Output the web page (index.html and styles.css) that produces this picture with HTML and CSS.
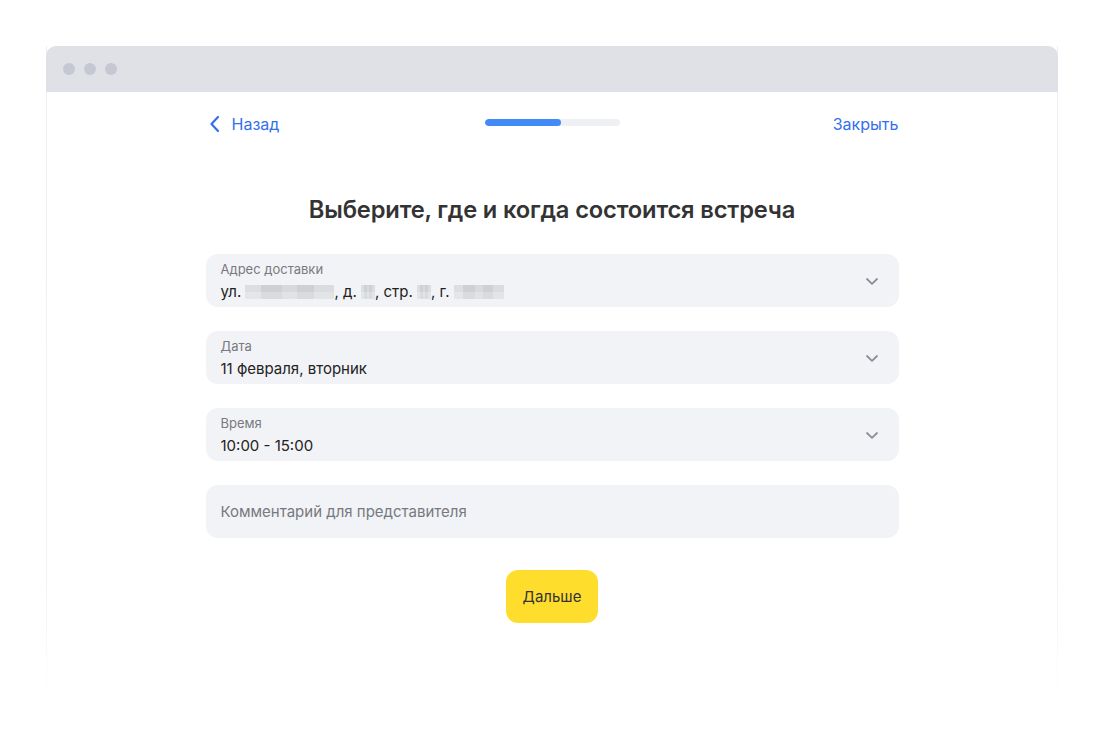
FILE: index.html
```html
<!DOCTYPE html>
<html lang="ru">
<head>
<meta charset="utf-8">
<title>Встреча</title>
<link rel="stylesheet" href="styles.css">
</head>
<body>
<div class="window">
  <div class="titlebar">
    <span class="dot"></span><span class="dot"></span><span class="dot"></span>
  </div>
  <div class="page">
    <div class="nav">
      <a class="back">
        <svg width="12" height="18" viewBox="0 0 12 18"><path d="M9 2 L2.5 9 L9 16" fill="none" stroke="#336fee" stroke-width="2.2" stroke-linecap="round" stroke-linejoin="round"/></svg>
        <span>Назад</span>
      </a>
      <div class="progress"><div class="fill" style="width:57%"></div></div>
      <a class="close">Закрыть</a>
    </div>
    <h1 class="title">Выберите, где и когда состоится встреча</h1>
    <div class="form">
      <div class="field">
        <div class="text">
          <div class="label">Адрес доставки</div>
          <div class="value">ул. <span class="blur b1"></span>, д. <span class="blur b2"></span>, стр. <span class="blur b3"></span>, г. <span class="blur b4"></span></div>
        </div>
        <svg class="chev" width="14" height="9" viewBox="0 0 14 9"><path d="M2 2 L7 6.8 L12 2" fill="none" stroke="#8b8e96" stroke-width="1.8" stroke-linecap="round" stroke-linejoin="round"/></svg>
      </div>
      <div class="field">
        <div class="text">
          <div class="label">Дата</div>
          <div class="value">11 февраля, вторник</div>
        </div>
        <svg class="chev" width="14" height="9" viewBox="0 0 14 9"><path d="M2 2 L7 6.8 L12 2" fill="none" stroke="#8b8e96" stroke-width="1.8" stroke-linecap="round" stroke-linejoin="round"/></svg>
      </div>
      <div class="field">
        <div class="text">
          <div class="label">Время</div>
          <div class="value">10:00 - 15:00</div>
        </div>
        <svg class="chev" width="14" height="9" viewBox="0 0 14 9"><path d="M2 2 L7 6.8 L12 2" fill="none" stroke="#8b8e96" stroke-width="1.8" stroke-linecap="round" stroke-linejoin="round"/></svg>
      </div>
      <div class="field comment">
        <div class="placeholder">Комментарий для представителя</div>
      </div>
    </div>
    <div class="actions">
      <button class="next">Дальше</button>
    </div>
  </div>
</div>
</body>
</html>
```

FILE: styles.css
```css
* { box-sizing: border-box; }
html, body { margin: 0; background: #fff; }
body {
  padding: 46px 46px 0;
  font-family: Inter, "Noto Sans", Roboto, sans-serif;
  color: #333;
  height: 748px;
  overflow: hidden;
}
.window {
  width: 1012px;
  height: 660px;
  border-radius: 10px 10px 0 0;
  background: #fff;
  border-left: 1px solid transparent;
  border-right: 1px solid transparent;
  border-image: linear-gradient(to bottom, #eceef2 0%, #f1f2f5 80%, rgba(255,255,255,0) 100%) 1;
}
.titlebar {
  height: 46px;
  background: #dfe1e6;
  border-radius: 10px 10px 0 0;
  display: flex;
  align-items: center;
  gap: 9px;
  padding-left: 17px;
  margin: 0 -1px;
}
.dot {
  width: 12px;
  height: 12px;
  border-radius: 50%;
  background: #c5c8d2;
}
.page {
  width: 693px;
  margin: 0 auto;
  padding-top: 21px;
}
.nav {
  height: 22px;
  display: grid;
  grid-template-columns: 1fr auto 1fr;
  align-items: center;
  font-size: 16px;
  color: #336fee;
}
.back {
  display: flex;
  align-items: center;
  gap: 11px;
  padding-left: 3px;
  justify-self: start;
}
.back svg { display: block; }
.progress {
  width: 135px;
  height: 7px;
  border-radius: 4px;
  background: #eff0f3;
  margin-top: -4px;
  overflow: hidden;
}
.fill {
  height: 100%;
  border-radius: 4px;
  background: #428bf6;
}
.close { justify-self: end; }
.title {
  margin: 60px 0 0;
  text-align: center;
  font-size: 23.7px;
  font-weight: 600;
  line-height: 30px;
  color: #333;
  letter-spacing: -0.15px;
}
.form {
  margin-top: 29px;
  display: flex;
  flex-direction: column;
  gap: 24px;
}
.field {
  height: 53px;
  border-radius: 12px;
  background: #f2f3f6;
  display: flex;
  align-items: center;
  justify-content: space-between;
  padding: 0 20px 0 15px;
}
.label {
  font-size: 13px;
  line-height: 16px;
  color: #777a80;
}
.value {
  margin-top: 6px;
  font-size: 15px;
  line-height: 18px;
  color: #222;
  display: flex;
  align-items: center;
  white-space: pre;
}
.blur {
  display: inline-block;
  height: 14px;
  background:
    linear-gradient(90deg, rgba(255,255,255,0.3) 0 18%, transparent 18% 42%, rgba(255,255,255,0.2) 42% 58%, transparent 58% 78%, rgba(255,255,255,0.25) 78%),
    linear-gradient(180deg, #cfd0d4 0 50%, #dadbde 50%);
  filter: blur(0.6px);
}
.b1 { width: 89px; }
.b2 { width: 14px; }
.b3 { width: 14px; }
.b4 { width: 50px; }
.chev { display: block; margin-top: 1px; }
.placeholder {
  font-size: 15px;
  color: #76797f;
}
.actions {
  margin-top: 32px;
  display: flex;
  justify-content: center;
}
.next {
  width: 92px;
  height: 53px;
  border: none;
  border-radius: 12px;
  background: #ffdd2d;
  font-family: inherit;
  font-size: 15px;
  color: #333;
}
```
